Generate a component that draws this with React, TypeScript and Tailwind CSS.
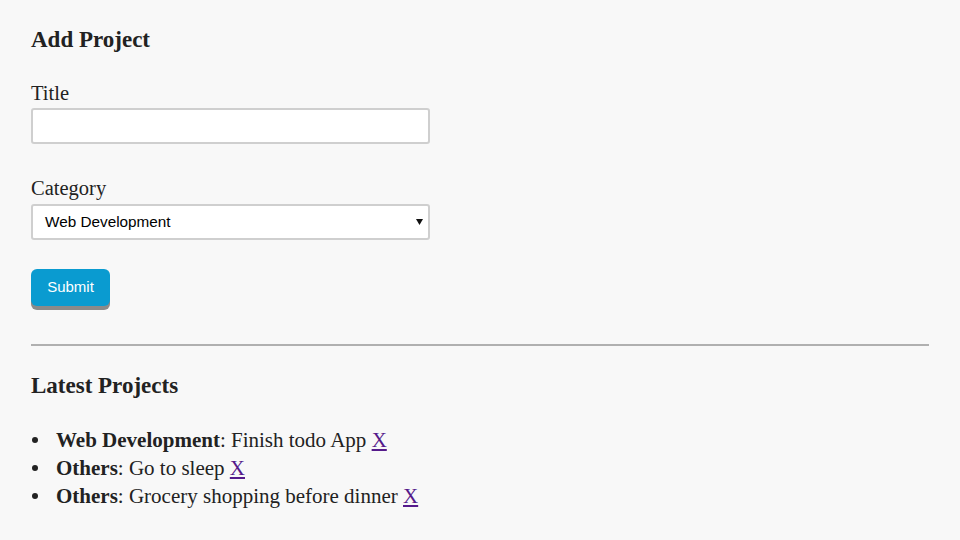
import React from "react";

const items = [
  { cat: "Web Development", title: "Finish todo App" },
  { cat: "Others", title: "Go to sleep" },
  { cat: "Others", title: "Grocery shopping before dinner" },
];

export default function App() {
  return (
    <div
      className="min-h-screen bg-[#f8f8f8] px-[31px] pt-[24px] text-[#222]"
      style={{ fontFamily: '"Liberation Serif", "DejaVu Serif", serif' }}
    >
      <h2 className="text-[23px] font-bold leading-[32px]">Add Project</h2>
      <label className="mt-[25px] block text-[20.5px] leading-[24px]">Title</label>
      <input
        type="text"
        className="mt-[3px] block h-[36px] w-[399px] rounded-[3px] border-2 border-[#cfcfcf] bg-white px-3 outline-none"
      />
      <label className="mt-[32px] block text-[20.5px] leading-[24px]">Category</label>
      <div className="relative mt-[4px] h-[36px] w-[399px] rounded-[3px] border-2 border-[#cfcfcf] bg-white">
        <div
          className="flex h-full items-center pl-[12px] text-[15.3px] text-black"
          style={{ fontFamily: '"Liberation Sans", Arial, sans-serif' }}
        >
          Web Development
        </div>
        <svg
          className="absolute right-[5px] top-[13px]"
          width="7"
          height="6"
          viewBox="0 0 7 6"
        >
          <path d="M0 0 L7 0 L3.5 6 Z" fill="#111" />
        </svg>
      </div>
      <button
        className="mt-[29px] block h-[37px] w-[79px] rounded-[6px] bg-[#0a9bd0] text-[15px] text-white shadow-[0_4px_0_#8a8a8a]"
        style={{ fontFamily: '"Liberation Sans", Arial, sans-serif' }}
      >
        Submit
      </button>
      <div className="mt-[38px] h-[2px] w-full bg-[#b0b0b0]" />
      <h2 className="mt-[24px] text-[23px] font-bold leading-[32px]">Latest Projects</h2>
      <ul className="mt-[24px]">
        {items.map((it, i) => (
          <li key={i} className="flex items-center text-[21px] leading-[28px]">
            <span className="flex w-[25px] items-center">
              <span className="ml-[1px] h-[6px] w-[6px] rounded-full bg-[#222]" />
            </span>
            <span>
              <b>{it.cat}</b>: {it.title}{" "}
              <a href="#" className="text-[#551a8b] underline">
                X
              </a>
            </span>
          </li>
        ))}
      </ul>
    </div>
  );
}
